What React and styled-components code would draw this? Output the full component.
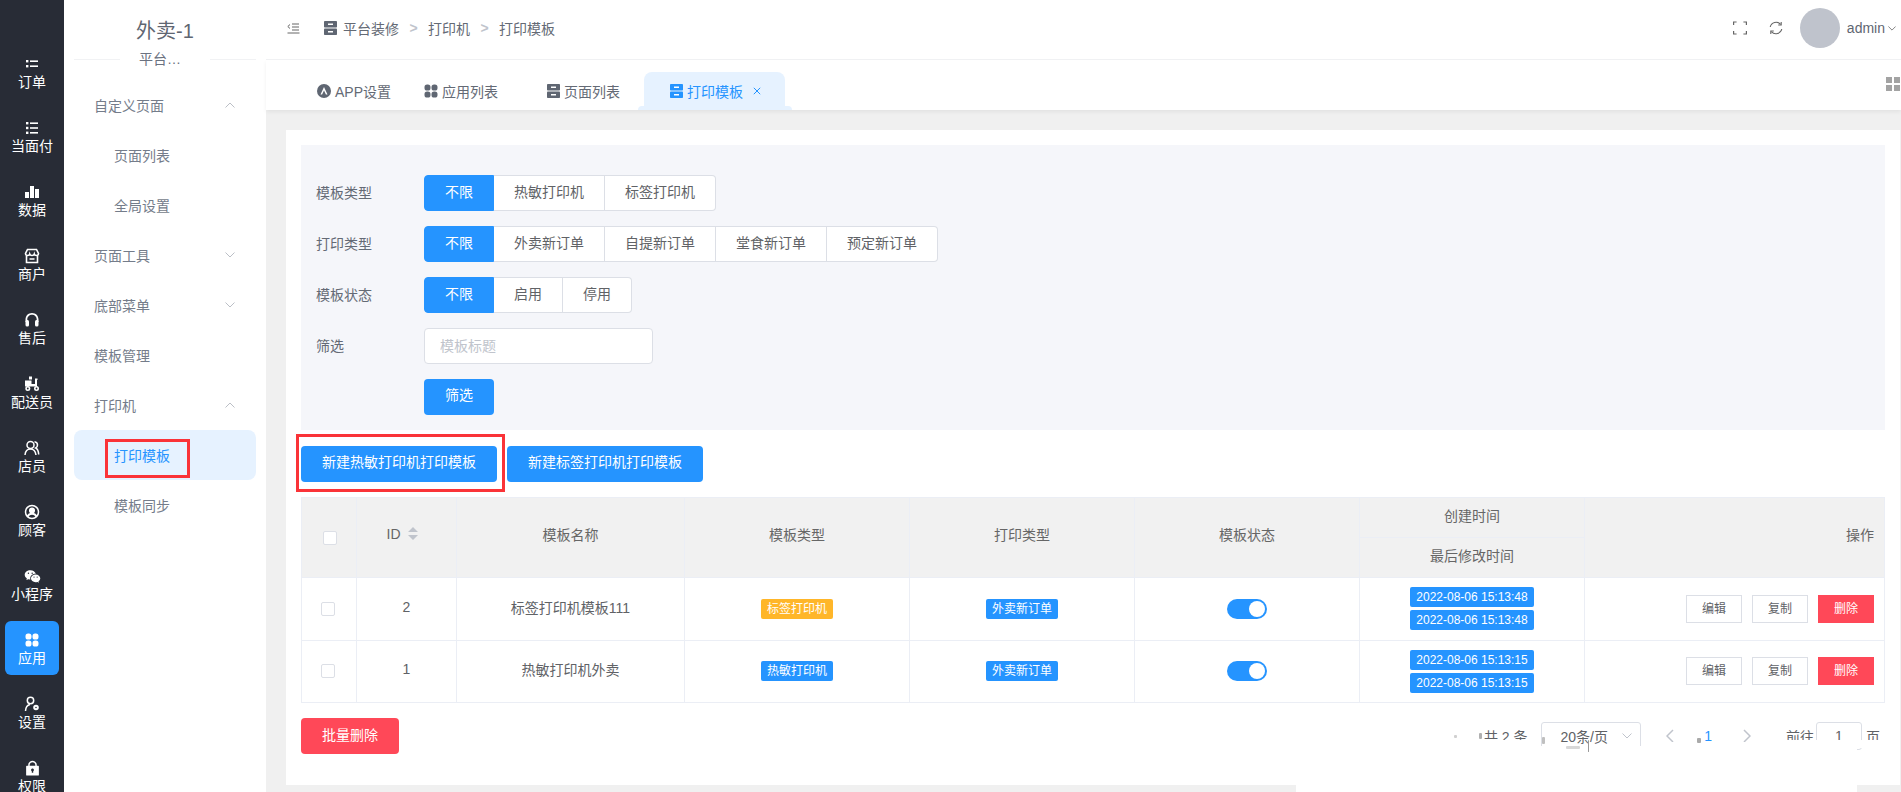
import React from "react";
import styled, { createGlobalStyle } from "styled-components";
import { RiWechatFill, RiLock2Fill } from "react-icons/ri";

const BLUE = "#2594ff";
const RED = "#ff4858";

const railItems = [
  { label: "订单", icon: "list2" },
  { label: "当面付", icon: "list3" },
  { label: "数据", icon: "bars" },
  { label: "商户", icon: "store" },
  { label: "售后", icon: "headset" },
  { label: "配送员", icon: "scooter" },
  { label: "店员", icon: "users" },
  { label: "顾客", icon: "customer" },
  { label: "小程序", icon: "wechat" },
  { label: "应用", icon: "apps", active: true },
  { label: "设置", icon: "setting" },
  { label: "权限", icon: "lock" },
];

const menuItems = [
  { label: "自定义页面", arrow: "up" },
  { label: "页面列表", sub: true },
  { label: "全局设置", sub: true },
  { label: "页面工具", arrow: "down" },
  { label: "底部菜单", arrow: "down" },
  { label: "模板管理" },
  { label: "打印机", arrow: "up" },
  { label: "打印模板", sub: true, active: true },
  { label: "模板同步", sub: true },
];

const filters = [
  { label: "模板类型", options: ["不限", "热敏打印机", "标签打印机"] },
  { label: "打印类型", options: ["不限", "外卖新订单", "自提新订单", "堂食新订单", "预定新订单"] },
  { label: "模板状态", options: ["不限", "启用", "停用"] },
];

const rows = [
  { id: 2, name: "标签打印机模板111", type: "标签打印机", color: "#ffb629", time: "2022-08-06 15:13:48" },
  { id: 1, name: "热敏打印机外卖", type: "热敏打印机", color: BLUE, time: "2022-08-06 15:13:15" },
];

const RailIcon = ({ name }) => {
  switch (name) {
    case "list2":
      return (
        <svg width="14" height="14" viewBox="0 0 14 14" fill="#fff">
          <rect x="1" y="3" width="2.4" height="2.4" />
          <rect x="1" y="8" width="2.4" height="2.4" />
          <rect x="5" y="3.4" width="8" height="1.6" />
          <rect x="5" y="8.4" width="8" height="1.6" />
        </svg>
      );
    case "list3":
      return (
        <svg width="14" height="14" viewBox="0 0 14 14" fill="#fff">
          <rect x="1" y="1" width="2.4" height="2.4" />
          <rect x="1" y="5.8" width="2.4" height="2.4" />
          <rect x="1" y="10.6" width="2.4" height="2.4" />
          <rect x="5" y="1.4" width="8" height="1.6" />
          <rect x="5" y="6.2" width="8" height="1.6" />
          <rect x="5" y="11" width="8" height="1.6" />
        </svg>
      );
    case "bars":
      return (
        <svg width="14" height="14" viewBox="0 0 14 14" fill="#fff">
          <rect x="0" y="7" width="4" height="6" />
          <rect x="5" y="1" width="4" height="12" />
          <rect x="10" y="4" width="4" height="9" />
        </svg>
      );
    case "store":
      return (
        <svg width="16" height="16" viewBox="0 0 16 16" fill="none" stroke="#fff" strokeWidth="1.6">
          <path d="M3.5 1.5h9l2 4c0 1.4-1 2-2 2s-2-.6-2.2-1.4C10 7 9 7.5 8 7.5S6 7 5.7 6.1C5.5 6.9 4.5 7.5 3.5 7.5s-2-.6-2-2z" />
          <path d="M2.5 8v6.5h11V8M5.5 11h5" />
        </svg>
      );
    case "headset":
      return (
        <svg width="16" height="16" viewBox="0 0 16 16" fill="#fff">
          <path d="M8 1C4.2 1 1.5 3.8 1.5 7.5V10h1.800V7.500C3.300 4.900 5.300 2.800 8 2.800s4.700 2.100 4.700 4.700V10h1.800V7.500C14.500 3.800 11.800 1 8 1z" />
          <rect x="1.5" y="8" width="3.5" height="6.5" rx="1.5" />
          <rect x="11" y="8" width="3.5" height="6.5" rx="1.5" />
        </svg>
      );
    case "scooter":
      return (
        <svg width="16" height="16" viewBox="0 0 16 16" fill="#fff">
          <rect x="5" y="0.5" width="3" height="3" />
          <path d="M1 4.500h6.500V8H11V2.500h2.500V4H13v6.500H1z" />
          <circle cx="3.8" cy="12.5" r="2.5" />
          <circle cx="12.5" cy="12.5" r="2.5" />
          <circle cx="3.8" cy="12.5" r="0.9" fill="#282c36" />
          <circle cx="12.5" cy="12.5" r="0.9" fill="#282c36" />
        </svg>
      );
    case "users":
      return (
        <svg width="16" height="16" viewBox="0 0 16 16" fill="none" stroke="#fff" strokeWidth="1.5">
          <circle cx="6.5" cy="5" r="3.5" />
          <path d="M1 15c.3-3.500 2.500-6 5.500-6s5 2.500 5.500 6" />
          <path d="M10.500 1.700c2 .3 3 1.700 3 3.300s-.8 2.500-1.800 3c1.800.8 2.800 3.500 3 6.500" />
        </svg>
      );
    case "customer":
      return (
        <svg width="16" height="16" viewBox="0 0 16 16" fill="none" stroke="#fff" strokeWidth="1.5">
          <circle cx="8" cy="8" r="6.5" />
          <circle cx="8" cy="6.5" r="2.3" fill="#fff" />
          <path d="M3.500 12.500c1-2 2.500-2.800 4.500-2.800s3.500.8 4.500 2.800" strokeWidth="2" />
        </svg>
      );
    case "wechat":
      return <RiWechatFill size={17} color="#fff" />;
    case "apps":
      return <Petals size={14} color="#fff" />;
    case "setting":
      return (
        <svg width="16" height="16" viewBox="0 0 16 16" fill="none" stroke="#fff" strokeWidth="1.5">
          <circle cx="6.5" cy="4.5" r="3.2" />
          <path d="M1.500 15c.2-3.500 2-6 4.500-6.500" />
          <circle cx="12" cy="11.5" r="1.8" strokeWidth="2" />
        </svg>
      );
    default:
      return <RiLock2Fill size={17} color="#fff" />;
  }
};

const Petals = ({ size, color }) => (
  <svg width={size} height={size} viewBox="0 0 14 14" fill={color}>
    <rect x="0.5" y="0.5" width="6" height="6" rx="2.6" />
    <rect x="7.5" y="0.5" width="6" height="6" rx="2.6" />
    <rect x="0.5" y="7.5" width="6" height="6" rx="2.6" />
    <rect x="7.5" y="7.5" width="6" height="6" rx="2.6" />
  </svg>
);

const Cabinet = ({ color }) => (
  <svg width="13" height="14" viewBox="0 0 13 14">
    <rect width="13" height="6.5" rx="0.8" fill={color} />
    <rect y="7.5" width="13" height="6.5" rx="0.8" fill={color} />
    <rect x="4" y="2.5" width="5" height="1.5" fill="#fff" />
    <rect x="4" y="10" width="5" height="1.5" fill="#fff" />
  </svg>
);

const AppBadge = () => (
  <svg width="14" height="14" viewBox="0 0 14 14">
    <circle cx="7" cy="7" r="7" fill="#5f6672" />
    <path d="M7 3 3.500 10.500h1.600L7 6.500l1.900 4h1.600z" fill="#fff" />
  </svg>
);

const Chevron = ({ up, color = "#bbbfc6", w = 10 }) => (
  <svg width={w} height={w / 2 + 1} viewBox="0 0 10 6" fill="none" stroke={color} strokeWidth="1">
    <path d={up ? "M.5 5.500 5 1l4.500 4.500" : "M.5.500 5 5 9.500.500"} />
  </svg>
);

const GlobalStyle = createGlobalStyle`
  html, body {
    margin: 0;
    padding: 0;
    height: 100%;
    overflow: hidden;
    font-family: "Liberation Sans", "Noto Sans CJK SC", sans-serif;
    font-size: 14px;
    color: #606266;
  }
  * {
    box-sizing: border-box;
  }
`;

const App = () => {
  return (
    <>
      <GlobalStyle />
      <Layout>
        <Rail>
          {railItems.map((item) => (
            <RailItem key={item.label} $active={item.active}>
              <RailGlyph>
                <RailIcon name={item.icon} />
              </RailGlyph>
              <span>{item.label}</span>
            </RailItem>
          ))}
        </Rail>

        <SideMenu>
          <ShopName>外卖-1</ShopName>
          <ShopDivider>
            <span>平台装修</span>
          </ShopDivider>
          <MenuList>
            {menuItems.map((item) => (
              <MenuItem key={item.label} $sub={item.sub} $active={item.active}>
                {item.label}
                {item.arrow && <Chevron up={item.arrow === "up"} />}
                {item.active && <MenuMarker />}
              </MenuItem>
            ))}
          </MenuList>
        </SideMenu>

        <Main>
          <TopBar>
            <Crumbs>
              <svg width="13" height="11" viewBox="0 0 13 11" fill="none" stroke="#666" strokeWidth="1">
                <path d="M3 1.500 .8 3.500 3 5.500M5 1h7M5 4h7M5 7h7M.5 10h12" />
              </svg>
              <CrumbPath>
                <Cabinet color="#5f6672" />
                <span>平台装修</span>
                <CrumbSep>&gt;</CrumbSep>
                <span>打印机</span>
                <CrumbSep>&gt;</CrumbSep>
                <span>打印模板</span>
              </CrumbPath>
            </Crumbs>
            <TopRight>
              <svg width="14" height="14" viewBox="0 0 14 14" fill="none" stroke="#666" strokeWidth="1.2">
                <path d="M.6 4V1h3M10.400 1h3v3M13.400 10v3h-3M3.600 13h-3v-3" />
              </svg>
              <svg width="14" height="14" viewBox="0 0 14 14" fill="none" stroke="#666" strokeWidth="1.1">
                <path d="M1.200 6a6 6 0 0 1 10.400-2.600M12.800 8a6 6 0 0 1-10.400 2.600" />
                <path d="M12.200 1v3h-3M1.800 13v-3h3" />
              </svg>
              <Avatar />
              <UserName>
                admin
                <Chevron w={8} color="#666" />
              </UserName>
            </TopRight>
          </TopBar>

          <TabBar>
            <Tab $gap={33}>
              <AppBadge />
              APP设置
            </Tab>
            <Tab $gap={49}>
              <Petals size={14} color="#5f6672" />
              应用列表
            </Tab>
            <Tab $gap={24}>
              <Cabinet color="#5f6672" />
              页面列表
            </Tab>
            <ActiveTab>
              <Cabinet color={BLUE} />
              打印模板
              <TabClose width="8" height="8" viewBox="0 0 8 8" fill="none" stroke={BLUE} strokeWidth="1">
                <path d="M.8.800l6.400 6.400M7.200.800.800 7.200" />
              </TabClose>
            </ActiveTab>
            <TabGrid>
              <i />
              <i />
              <i />
              <i />
            </TabGrid>
          </TabBar>

          <Content>
            <Card>
              <FilterPanel>
                {filters.map((filter) => (
                  <FilterRow key={filter.label}>
                    <FilterLabel>{filter.label}</FilterLabel>
                    <RadioGroup>
                      {filter.options.map((option, i) => (
                        <RadioButton key={option} $active={i === 0}>
                          {option}
                        </RadioButton>
                      ))}
                    </RadioGroup>
                  </FilterRow>
                ))}
                <FilterRow>
                  <FilterLabel>筛选</FilterLabel>
                  <TitleInput placeholder="模板标题" readOnly />
                </FilterRow>
                <FilterRow>
                  <FilterLabel />
                  <PrimaryButton>筛选</PrimaryButton>
                </FilterRow>
              </FilterPanel>

              <CreateRow>
                <MarkedButton>
                  <PrimaryButton>新建热敏打印机打印模板</PrimaryButton>
                  <ButtonMarker />
                </MarkedButton>
                <PrimaryButton>新建标签打印机打印模板</PrimaryButton>
              </CreateRow>

              <Table>
                <colgroup>
                  <col width="55" />
                  <col width="100" />
                  <col width="228" />
                  <col width="225" />
                  <col width="225" />
                  <col width="225" />
                  <col width="225" />
                  <col />
                </colgroup>
                <thead>
                  <tr>
                    <th rowSpan={2}>
                      <CheckBox $shift={11} />
                    </th>
                    <TallHead rowSpan={2}>
                      <IdHead>
                        ID
                        <svg width="10" height="13" viewBox="0 0 10 13" fill="#c0c4cc">
                          <path d="M5 0 10 5H0zM5 13 0 8h10z" />
                        </svg>
                      </IdHead>
                    </TallHead>
                    <TallHead rowSpan={2}>模板名称</TallHead>
                    <TallHead rowSpan={2}>模板类型</TallHead>
                    <TallHead rowSpan={2}>打印类型</TallHead>
                    <TallHead rowSpan={2}>模板状态</TallHead>
                    <TimeHead>创建时间</TimeHead>
                    <ActionHead rowSpan={2}>操作</ActionHead>
                  </tr>
                  <tr>
                    <TimeHead>最后修改时间</TimeHead>
                  </tr>
                </thead>
                <tbody>
                  {rows.map((row) => (
                    <tr key={row.id}>
                      <td>
                        <CheckBox $shift={9} />
                      </td>
                      <TextCell>{row.id}</TextCell>
                      <TextCell>{row.name}</TextCell>
                      <td>
                        <Tag $color={row.color}>{row.type}</Tag>
                      </td>
                      <td>
                        <Tag $color={BLUE}>外卖新订单</Tag>
                      </td>
                      <td>
                        <Switch />
                      </td>
                      <td>
                        <TimeStack>
                          <Tag $color={BLUE}>{row.time}</Tag>
                          <Tag $color={BLUE}>{row.time}</Tag>
                        </TimeStack>
                      </td>
                      <td>
                        <Actions>
                          <SmallButton>编辑</SmallButton>
                          <SmallButton>复制</SmallButton>
                          <SmallButton $danger>删除</SmallButton>
                        </Actions>
                      </td>
                    </tr>
                  ))}
                </tbody>
              </Table>

              <Footer>
                <DangerButton>批量删除</DangerButton>
                <Pagination>
                  <Total>共 2 条</Total>
                  <PageSize>
                    20条/页
                    <Chevron color="#c0c4cc" />
                  </PageSize>
                  <PageCell>
                    <svg width="8" height="14" viewBox="0 0 8 14" fill="none" stroke="#c0c4cc" strokeWidth="1.5">
                      <path d="M7 1 1 7l6 6" />
                    </svg>
                  </PageCell>
                  <PageCell $current>1</PageCell>
                  <PageCell>
                    <svg width="8" height="14" viewBox="0 0 8 14" fill="none" stroke="#c0c4cc" strokeWidth="1.5">
                      <path d="m1 1 6 6-6 6" />
                    </svg>
                  </PageCell>
                  <JumpLabel>前往</JumpLabel>
                  <JumpInput>1</JumpInput>
                  <span>页</span>
                </Pagination>
                <Smudge $left={995} $top={28} $w={561} $h={60} />
                <Smudge $left={1160} $top={22} $w={80} $h={8} />
                <Smudge $left={1470} $top={22} $w={115} $h={8} />
                <Smudge $left={1345} $top={24} $w={125} $h={6} />
                <Speck $left={1153} $top={17} $w={3} $h={3} $color="#d0d0d0" />
                <Speck $left={1178} $top={15} $w={3} $h={6} $color="#b0b0b0" />
                <Speck $left={1241} $top={19} $w={3} $h={7} $color="#c0c0c0" />
                <Speck $left={1287} $top={22} $w={1} $h={12} $color="#999" />
                <Speck $left={1265} $top={28} $w={14} $h={3} $color="#d8d8d8" />
                <Speck $left={1396} $top={20} $w={4} $h={5} $color="#aaa" />
              </Footer>
            </Card>
          </Content>
        </Main>
      </Layout>
    </>
  );
};

export default App;

const Layout = styled.div`
  display: flex;
  width: 1901px;
  height: 792px;
  overflow: hidden;
`;

const Rail = styled.nav`
  flex: 0 0 64px;
  display: flex;
  flex-direction: column;
  align-items: center;
  gap: 10px;
  padding-top: 45px;
  background: #282c36;
`;

const RailItem = styled.div`
  flex: 0 0 54px;
  width: 54px;
  display: flex;
  flex-direction: column;
  align-items: center;
  color: #fff;
  font-size: 14px;
  line-height: 18px;
  border-radius: 6px;
  background: ${(p) => (p.$active ? BLUE : "transparent")};
`;

const RailGlyph = styled.div`
  height: 18px;
  margin-top: 10px;
  display: flex;
  align-items: center;
  justify-content: center;
`;

const SideMenu = styled.aside`
  flex: 0 0 202px;
  padding: 0 10px;
  background: #fff;
`;

const ShopName = styled.div`
  padding-top: 17px;
  height: 50px;
  text-align: center;
  font-size: 20px;
  line-height: 28px;
  color: #5f6672;
`;

const ShopDivider = styled.div`
  position: relative;
  height: 19px;
  display: flex;
  justify-content: center;

  &::before {
    content: "";
    position: absolute;
    left: 0;
    right: 0;
    top: 9px;
    border-top: 1px solid #f1f2f4;
  }

  span {
    position: relative;
    width: 90px;
    padding: 0 19px;
    background: #fff;
    color: #6b7280;
    line-height: 19px;
    white-space: nowrap;
    overflow: hidden;
    text-overflow: ellipsis;
  }
`;

const MenuList = styled.div`
  margin-top: 11px;
`;

const MenuItem = styled.div`
  position: relative;
  display: flex;
  align-items: center;
  justify-content: space-between;
  height: 50px;
  padding: 0 21px 0 ${(p) => (p.$sub ? "40px" : "20px")};
  border-radius: 8px;
  color: ${(p) => (p.$active ? BLUE : "#747c8a")};
  background: ${(p) => (p.$active ? "#e6f2ff" : "transparent")};
`;

const MenuMarker = styled.div`
  position: absolute;
  left: 31px;
  top: 9px;
  width: 85px;
  height: 39px;
  border: 3px solid #fa3338;
`;

const Main = styled.div`
  flex: 1;
  min-width: 0;
  display: flex;
  flex-direction: column;
  background: #f0f0f0;
`;

const TopBar = styled.header`
  flex: 0 0 60px;
  display: flex;
  align-items: center;
  justify-content: space-between;
  padding: 0 5px 3px 21px;
  background: #fff;
  border-bottom: 1px solid #f1f2f4;
`;

const Crumbs = styled.div`
  display: flex;
  align-items: center;
  gap: 24px;
`;

const CrumbPath = styled.div`
  display: flex;
  align-items: center;
  gap: 6px;
  color: #646a75;
`;

const CrumbSep = styled.span`
  width: 29px;
  margin: 0 -6px;
  text-align: center;
  color: #c0c4cc;
  font-weight: bold;
`;

const TopRight = styled.div`
  display: flex;
  align-items: center;
  gap: 22px;
`;

const Avatar = styled.div`
  width: 40px;
  height: 40px;
  margin-left: -5px;
  border-radius: 50%;
  background: #bfc3cc;
`;

const UserName = styled.div`
  display: flex;
  align-items: center;
  gap: 3px;
  margin-left: -15px;
  color: #5f6672;
`;

const TabBar = styled.div`
  position: relative;
  flex: 0 0 50px;
  display: flex;
  align-items: flex-end;
  padding-left: 51px;
  background: #fff;
  box-shadow: 0 2px 4px rgba(0, 0, 0, 0.06);
  z-index: 1;
`;

const Tab = styled.div`
  display: flex;
  align-items: center;
  gap: 4px;
  height: 38px;
  margin-right: ${(p) => p.$gap}px;
  color: #646a75;
`;

const ActiveTab = styled.div`
  position: relative;
  display: flex;
  align-items: center;
  gap: 4px;
  height: 38px;
  padding: 0 24px 0 26px;
  border-radius: 8px 8px 0 0;
  background: #e6f2ff;
  color: ${BLUE};

  &::before,
  &::after {
    content: "";
    position: absolute;
    bottom: 0;
    width: 7px;
    height: 4px;
    background: #e6f2ff;
  }

  &::before {
    left: -6px;
    border-radius: 6px 0 0 0;
  }

  &::after {
    right: -7px;
    border-radius: 0 6px 0 0;
  }
`;

const TabClose = styled.svg`
  margin-left: 6px;
`;

const TabGrid = styled.div`
  position: absolute;
  right: 1px;
  top: 17px;
  display: grid;
  grid-template-columns: 6px 6px;
  gap: 2px;

  i {
    height: 6px;
    background: #a3a3a3;
  }
`;

const Content = styled.main`
  flex: 1;
  min-height: 0;
  padding: 20px 1px 7px 20px;
`;

const Card = styled.section`
  height: 100%;
  padding: 15px 15px 0;
  background: #fff;
`;

const FilterPanel = styled.div`
  display: flex;
  flex-direction: column;
  gap: 15px;
  padding: 30px 15px 15px;
  background: #f5f6fa;
`;

const FilterRow = styled.div`
  display: flex;
  align-items: center;
  height: 36px;
`;

const FilterLabel = styled.div`
  flex: 0 0 108px;
  padding-bottom: 3px;
  color: #646a75;
`;

const RadioGroup = styled.div`
  display: flex;
`;

const RadioButton = styled.div`
  height: 36px;
  padding: 0 20px;
  line-height: 32px;
  background: ${(p) => (p.$active ? BLUE : "#fff")};
  color: ${(p) => (p.$active ? "#fff" : "#606266")};
  border: 1px solid ${(p) => (p.$active ? BLUE : "#dcdfe6")};
  border-left-width: 0;

  &:first-child {
    border-left-width: 1px;
    border-radius: 4px 0 0 4px;
  }

  &:last-child {
    border-radius: 0 4px 4px 0;
  }
`;

const TitleInput = styled.input`
  width: 229px;
  height: 36px;
  padding: 0 15px;
  border: 1px solid #dcdfe6;
  border-radius: 4px;
  outline: none;
  font: inherit;
  background: #fff;

  &::placeholder {
    color: #c0c4cc;
  }
`;

const PrimaryButton = styled.div`
  height: 36px;
  padding: 0 21px;
  line-height: 33px;
  border-radius: 4px;
  background: ${BLUE};
  color: #fff;
`;

const CreateRow = styled.div`
  display: flex;
  gap: 10px;
  margin: 16px 0 15px;
`;

const MarkedButton = styled.div`
  position: relative;
`;

const ButtonMarker = styled.div`
  position: absolute;
  left: -5px;
  right: -8px;
  top: -12px;
  bottom: -10px;
  border: 3px solid #fa3338;
`;

const Table = styled.table`
  width: 1584px;
  table-layout: fixed;
  border-collapse: collapse;
  border: 1px solid #ebeef5;
  color: #606266;
  text-align: center;

  th,
  td {
    padding: 0 10px;
    border: 1px solid #ebeef5;
  }

  th {
    height: 40px;
    font-weight: normal;
    background: #f1f1f1;
    color: #666;
  }

  td {
    height: 62.5px;
  }
`;

const TallHead = styled.th`
  && {
    padding-bottom: 8px;
  }
`;

const TimeHead = styled.th`
  && {
    padding-bottom: 6px;
  }
`;

const ActionHead = styled.th`
  && {
    padding-bottom: 8px;
    text-align: right;
  }
`;

const TextCell = styled.td`
  && {
    padding-bottom: 4px;
  }
`;

const IdHead = styled.div`
  display: inline-flex;
  align-items: center;
  gap: 7px;
  margin-left: -9px;
`;

const CheckBox = styled.div`
  width: 14px;
  height: 14px;
  margin-left: ${(p) => p.$shift || 0}px;
  border: 1px solid #dcdfe6;
  border-radius: 2px;
  background: #fff;
`;

const Tag = styled.span`
  display: inline-block;
  height: 20px;
  padding: 0 6px;
  line-height: 20px;
  border-radius: 2px;
  background: ${(p) => p.$color};
  color: #fff;
  font-size: 12px;
  white-space: nowrap;
`;

const Switch = styled.span`
  display: inline-block;
  position: relative;
  width: 40px;
  height: 20px;
  vertical-align: middle;
  border-radius: 10px;
  background: ${BLUE};

  &::after {
    content: "";
    position: absolute;
    top: 2px;
    right: 2px;
    width: 16px;
    height: 16px;
    border-radius: 50%;
    background: #fff;
  }
`;

const TimeStack = styled.div`
  display: flex;
  flex-direction: column;
  align-items: center;
  gap: 3px;
`;

const Actions = styled.div`
  display: flex;
  justify-content: flex-end;
  gap: 10px;
`;

const SmallButton = styled.div`
  width: 56px;
  height: 28px;
  line-height: 26px;
  font-size: 12px;
  text-align: center;
  border: 1px solid ${(p) => (p.$danger ? RED : "#dcdfe6")};
  background: ${(p) => (p.$danger ? RED : "#fff")};
  color: ${(p) => (p.$danger ? "#fff" : "#606266")};
`;

const Footer = styled.div`
  position: relative;
  display: flex;
  justify-content: space-between;
  margin-top: 15px;
`;

const DangerButton = styled.div`
  height: 36px;
  padding: 0 21px;
  line-height: 35px;
  border-radius: 4px;
  background: ${RED};
  color: #fff;
`;

const Pagination = styled.div`
  display: flex;
  align-items: center;
  height: 36px;
  padding-right: 5px;
  color: #606266;
`;

const Total = styled.span`
  margin-right: 13px;
`;

const PageSize = styled.div`
  display: flex;
  align-items: center;
  justify-content: space-between;
  width: 100px;
  height: 28px;
  margin-right: 10px;
  padding: 0 8px 0 19px;
  border: 1px solid #dcdfe6;
  border-radius: 3px;
`;

const PageCell = styled.div`
  width: 38.5px;
  display: flex;
  justify-content: center;
  color: ${(p) => (p.$current ? BLUE : "inherit")};
`;

const JumpLabel = styled.span`
  margin-left: 20px;
`;

const JumpInput = styled.div`
  width: 46px;
  height: 28px;
  margin: 0 4px 0 2px;
  text-align: center;
  line-height: 26px;
  border: 1px solid #dcdfe6;
  border-radius: 3px;
`;

const Smudge = styled.div`
  position: absolute;
  left: ${(p) => p.$left}px;
  top: ${(p) => p.$top}px;
  width: ${(p) => p.$w}px;
  height: ${(p) => p.$h}px;
  background: #fff;
  border-radius: 0 0 0 14px;
`;

const Speck = styled.div`
  position: absolute;
  left: ${(p) => p.$left}px;
  top: ${(p) => p.$top}px;
  width: ${(p) => p.$w}px;
  height: ${(p) => p.$h}px;
  background: ${(p) => p.$color};
  border-radius: 1px;
`;
